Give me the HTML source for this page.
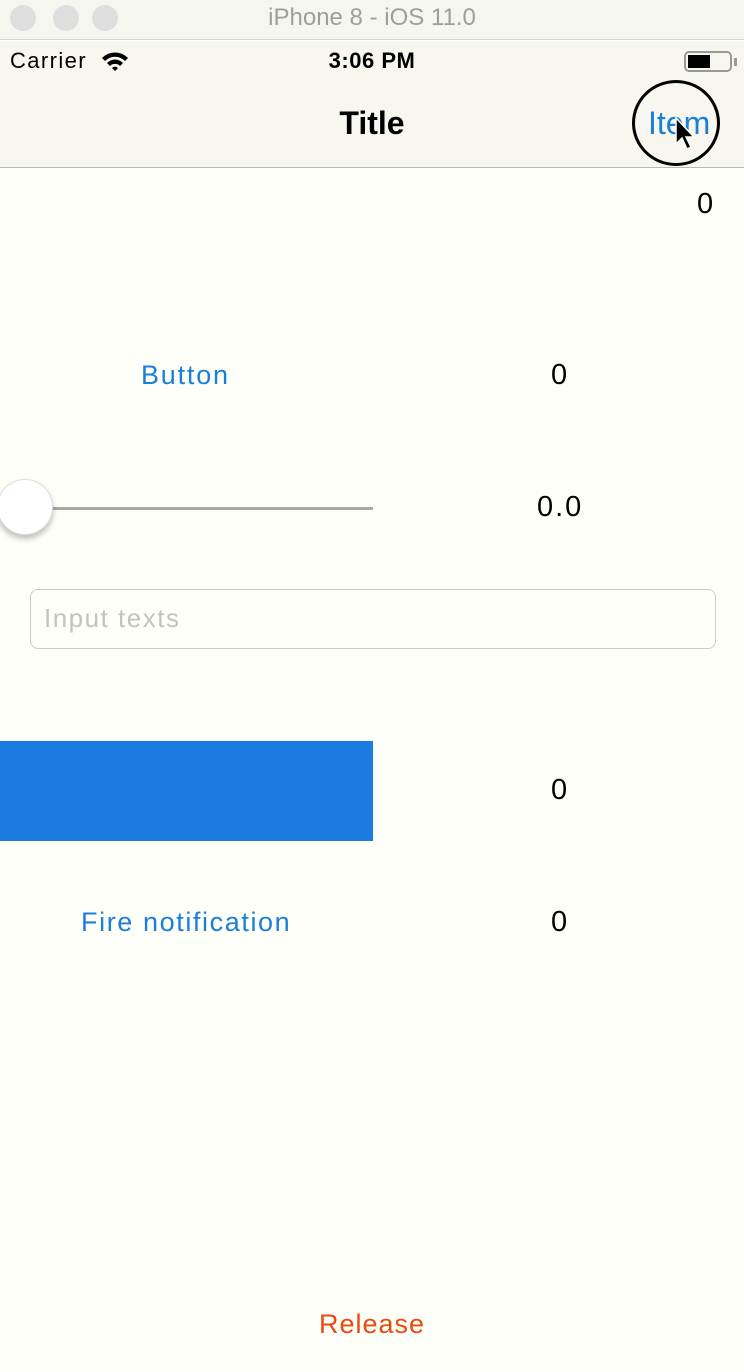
<!DOCTYPE html>
<html><head><meta charset="utf-8"><style>
*{margin:0;padding:0;box-sizing:border-box}
body{width:744px;height:1372px;background:#fffffa;font-family:"Liberation Sans",sans-serif;position:relative;overflow:hidden}
.a{position:absolute;white-space:nowrap}
.blue{color:#1a7fd8}
.n{font-size:29px;color:#000}
</style></head><body>
<div class="a" style="left:0;top:0;width:744px;height:40px;background:#f6f6f0;border-bottom:1px solid #d6d6d0"></div>
<div class="a" style="left:10px;top:5px;width:26px;height:26px;border-radius:50%;background:#dedede"></div>
<div class="a" style="left:53px;top:5px;width:26px;height:26px;border-radius:50%;background:#dedede"></div>
<div class="a" style="left:92px;top:5px;width:26px;height:26px;border-radius:50%;background:#dedede"></div>
<div class="a" style="left:0;width:744px;top:4px;text-align:center;font-size:24px;color:#9e9e9e">iPhone 8 - iOS 11.0</div>
<div class="a" style="left:0;top:41px;width:744px;height:127px;background:#f7f7f0;border-bottom:1px solid #b8b8b8"></div>
<div class="a" style="left:10px;top:48px;font-size:22px;letter-spacing:1.4px">Carrier</div>
<svg class="a" style="left:100px;top:50px" width="30" height="22" viewBox="0 0 30 22"><path d="M2 8 A18 18 0 0 1 28 8 L25 11 A14 14 0 0 0 5 11Z M7 13 A11 11 0 0 1 23 13 L20 16 A7 7 0 0 0 10 16Z M12 18 A4 4 0 0 1 18 18 L15 21Z" fill="#000"/></svg>
<div class="a" style="left:0;width:744px;top:48px;text-align:center;font-size:22px;font-weight:bold;letter-spacing:0.5px">3:06 PM</div>
<div class="a" style="left:684px;top:51px;width:48px;height:21px;border:2px solid #999;border-radius:5px"></div>
<div class="a" style="left:688px;top:55px;width:22px;height:13px;background:#000"></div>
<div class="a" style="left:734px;top:58px;width:3px;height:8px;background:#999"></div>
<div class="a" style="left:0;width:744px;top:105px;text-align:center;font-size:32px;font-weight:bold">Title</div>
<div class="a blue" style="left:648px;top:105px;font-size:32px">Item</div>
<div class="a" style="left:632px;top:80px;width:88px;height:86px;border:3px solid #000;border-radius:50%"></div>
<svg class="a" style="left:674px;top:116px" width="22" height="38" viewBox="0 0 22 38"><path d="M2 2 L2 28 L8 22 L13 33 L17 31 L12 21 L20 21Z" fill="#000" stroke="#fff" stroke-width="1.5"/></svg>
<div class="a n" style="left:697px;top:188px">0</div>
<div class="a blue" style="left:141px;top:360px;font-size:27px;letter-spacing:1.8px">Button</div>
<div class="a n" style="left:551px;top:359px">0</div>
<div class="a" style="left:40px;top:507px;width:333px;height:3px;background:#a8a8a8"></div>
<div class="a" style="left:-3px;top:479px;width:56px;height:56px;border-radius:50%;background:#fff;box-shadow:0 4px 6px rgba(0,0,0,.25);border:1px solid #ddd"></div>
<div class="a n" style="left:537px;top:491px;letter-spacing:2px">0.0</div>
<div class="a" style="left:30px;top:589px;width:686px;height:60px;border:1px solid #ccccc0;border-radius:8px"></div>
<div class="a" style="left:44px;top:603px;font-size:26px;color:#c4c4bc;letter-spacing:1.5px">Input texts</div>
<div class="a" style="left:0;top:741px;width:373px;height:100px;background:#1a7be0"></div>
<div class="a n" style="left:551px;top:774px">0</div>
<div class="a blue" style="left:81px;top:907px;font-size:27px;letter-spacing:1.6px">Fire notification</div>
<div class="a n" style="left:551px;top:906px">0</div>
<div class="a" style="left:0;width:744px;top:1309px;text-align:center;font-size:27px;color:#e84a10;letter-spacing:1px">Release</div>
</body></html>
